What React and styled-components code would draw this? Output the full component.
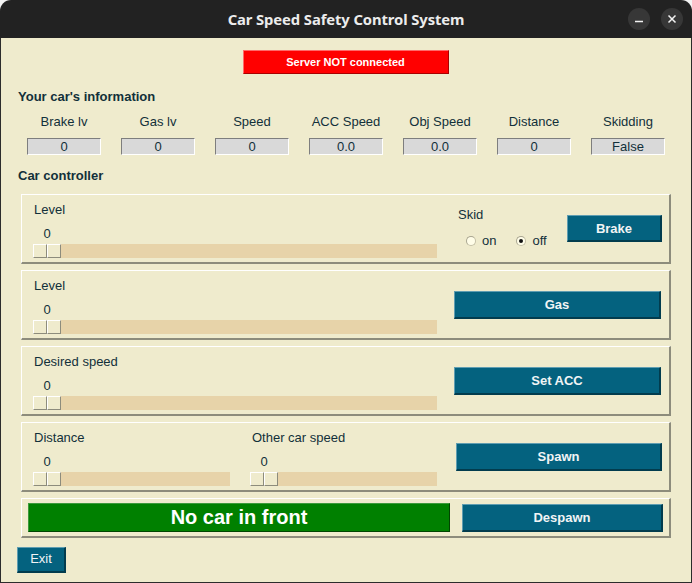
import React from "react";
import styled, { createGlobalStyle } from "styled-components";

const GlobalStyle = createGlobalStyle`
  html, body {
    margin: 0;
    padding: 0;
    background: #f3f3f3;
  }
  body {
    font-family: "Liberation Sans", Arial, sans-serif;
  }
`;

const Window = styled.div`
  width: 692px;
  height: 583px;
  display: flex;
  flex-direction: column;
  border-radius: 11px 11px 0 0;
  overflow: hidden;
  background: #222222;
`;

const TitleBar = styled.div`
  height: 38px;
  flex: none;
  display: grid;
  grid-template-columns: 1fr auto 1fr;
  align-items: center;
`;

const Title = styled.div`
  grid-column: 2;
  color: #ececec;
  font-family: "Noto Sans", sans-serif;
  font-weight: 700;
  font-size: 14.8px;
  letter-spacing: -0.1px;
`;

const Controls = styled.div`
  grid-column: 3;
  justify-self: end;
  display: flex;
  gap: 11px;
  padding-right: 9px;
`;

const CtrlButton = styled.div`
  width: 22px;
  height: 22px;
  border-radius: 50%;
  background: #373737;
  display: flex;
  align-items: center;
  justify-content: center;
`;

const Body = styled.div`
  flex: 1;
  background: #efebcd;
  border: 1px solid #2c2c2c;
  border-top: none;
  padding: 12px 0 0 16px;
  display: flex;
  flex-direction: column;
  color: #12303a;
`;

const Status = styled.div`
  align-self: center;
  margin-left: -17px;
  width: 206px;
  height: 24px;
  box-sizing: border-box;
  background: #ff0000;
  border-top: 1px solid #ff6a6a;
  border-left: 1px solid #ff6a6a;
  border-bottom: 1px solid #a80000;
  border-right: 1px solid #a80000;
  color: #ffffff;
  font-weight: 700;
  font-size: 11px;
  display: flex;
  align-items: center;
  justify-content: center;
`;

const Heading = styled.div`
  font-weight: 700;
  font-size: 13px;
  line-height: 16px;
  padding-top: 1px;
  margin-left: 1px;
  margin-top: ${(p) => p.$top}px;
`;

const InfoRow = styled.div`
  display: flex;
  gap: 20px;
  margin: 8px 0 0 10px;
`;

const InfoCol = styled.div`
  width: 74px;
  display: flex;
  flex-direction: column;
  align-items: center;
  gap: 8px;
`;

const InfoLabel = styled.div`
  font-size: 13px;
  line-height: 16px;
  padding-top: 1px;
  white-space: nowrap;
`;

const Entry = styled.div`
  width: 74px;
  height: 17px;
  box-sizing: border-box;
  background: #d9d9d9;
  border-top: 1px solid #7e7e7e;
  border-left: 1px solid #7e7e7e;
  border-bottom: 1px solid #ffffff;
  border-right: 1px solid #ffffff;
  font-size: 13px;
  line-height: 15px;
  text-align: center;
`;

const Panels = styled.div`
  display: flex;
  flex-direction: column;
  gap: 6px;
  margin: 10px 0 0 4px;
  width: 650px;
`;

const Panel = styled.div`
  height: ${(p) => p.$h || 70}px;
  box-sizing: border-box;
  border-top: 1px solid #ffffff;
  border-left: 1px solid #ffffff;
  border-right: 2px solid #8d8c7c;
  border-bottom: 2px solid #8d8c7c;
  display: flex;
  align-items: center;
  padding: 0 7px 0 ${(p) => p.$pl ?? 11}px;
`;

const SliderGroup = styled.div`
  width: ${(p) => p.$w}px;
  display: flex;
  flex-direction: column;
  padding-top: 2px;
  margin-right: ${(p) => p.$mr || 0}px;
`;

const SliderLabel = styled.div`
  font-size: 13px;
  line-height: 15px;
  padding-left: ${(p) => p.$pl ?? 1}px;
  margin-bottom: 9px;
  white-space: nowrap;
`;

const SliderValue = styled.div`
  width: 28px;
  text-align: center;
  font-size: 13px;
  line-height: 15px;
  margin-bottom: 3px;
`;

const Trough = styled.div`
  height: 14px;
  background: #e7d3a9;
  display: flex;
`;

const HandleHalf = styled.div`
  width: 14px;
  height: 14px;
  box-sizing: border-box;
  background: #efebcd;
  border-top: 1px solid #ffffff;
  border-left: 1px solid #ffffff;
  border-bottom: 1px solid #8d8c7c;
  border-right: 1px solid #8d8c7c;
`;

const SkidGroup = styled.div`
  display: flex;
  flex-direction: column;
  gap: 11px;
  margin-left: 21px;
  padding: 2px 0 4px;
`;

const SkidLabel = styled.div`
  font-size: 13px;
  line-height: 15px;
`;

const RadioRow = styled.div`
  display: flex;
  gap: 20px;
  padding-left: 8px;
`;

const RadioItem = styled.label`
  display: flex;
  align-items: center;
  gap: 6px;
  font-size: 13px;
  line-height: 15px;
`;

const RadioDot = styled.span`
  width: 10px;
  height: 10px;
  box-sizing: border-box;
  border-radius: 50%;
  background: #fffde8;
  border: 1px solid #c4c0a6;
  border-top-color: #a8a590;
  border-left-color: #a8a590;
  display: flex;
  align-items: center;
  justify-content: center;
  &::after {
    content: "";
    width: 4px;
    height: 4px;
    border-radius: 50%;
    background: ${(p) => (p.$on ? "#111" : "transparent")};
  }
`;

const Button = styled.div`
  width: ${(p) => p.$w}px;
  height: ${(p) => p.$h || 28}px;
  margin-left: auto;
  margin-right: ${(p) => p.$mr || 0}px;
  box-sizing: border-box;
  padding-top: 1px;
  background: #04627f;
  border-top: 1px solid #5f9db1;
  border-left: 1px solid #5f9db1;
  border-bottom: 2px solid #023c4e;
  border-right: 2px solid #023c4e;
  color: #f1f4f5;
  font-weight: 700;
  font-size: 13px;
  display: flex;
  align-items: center;
  justify-content: center;
`;

const Indicator = styled.div`
  width: 422px;
  height: 29px;
  box-sizing: border-box;
  background: #008000;
  border-top: 1px solid #3c9a3c;
  border-left: 1px solid #3c9a3c;
  border-bottom: 1px solid #004400;
  border-right: 1px solid #004400;
  color: #ffffff;
  font-weight: 700;
  font-size: 20px;
  display: flex;
  align-items: center;
  justify-content: center;
`;

const ExitButton = styled.div`
  width: 49px;
  height: 26px;
  margin-top: 9px;
  box-sizing: border-box;
  background: #04627f;
  border-top: 1px solid #5f9db1;
  border-left: 1px solid #5f9db1;
  border-bottom: 2px solid #023c4e;
  border-right: 2px solid #023c4e;
  color: #f1f4f5;
  font-size: 13px;
  display: flex;
  align-items: center;
  justify-content: center;
  padding-bottom: 3px;
`;

const info = [
  ["Brake lv", "0"],
  ["Gas lv", "0"],
  ["Speed", "0"],
  ["ACC Speed", "0.0"],
  ["Obj Speed", "0.0"],
  ["Distance", "0"],
  ["Skidding", "False"],
];

function Slider({ label, width, mr, labelPad }) {
  return (
    <SliderGroup $w={width} $mr={mr}>
      <SliderLabel $pl={labelPad}>{label}</SliderLabel>
      <SliderValue>0</SliderValue>
      <Trough>
        <HandleHalf />
        <HandleHalf />
      </Trough>
    </SliderGroup>
  );
}

export default function App() {
  return (
    <>
      <GlobalStyle />
      <Window>
        <TitleBar>
          <Title>Car Speed Safety Control System</Title>
          <Controls>
            <CtrlButton>
              <svg width="10" height="10" viewBox="0 0 10 10">
                <path d="M1 7.5h8" stroke="#f2f2f2" strokeWidth="1.6" />
              </svg>
            </CtrlButton>
            <CtrlButton>
              <svg width="10" height="10" viewBox="0 0 10 10">
                <path d="M1.5 1.5l7 7M8.5 1.5l-7 7" stroke="#f2f2f2" strokeWidth="1.5" />
              </svg>
            </CtrlButton>
          </Controls>
        </TitleBar>
        <Body>
          <Status>Server NOT connected</Status>
          <Heading $top={14}>Your car's information</Heading>
          <InfoRow>
            {info.map(([label, value]) => (
              <InfoCol key={label}>
                <InfoLabel>{label}</InfoLabel>
                <Entry>{value}</Entry>
              </InfoCol>
            ))}
          </InfoRow>
          <Heading $top={12}>Car controller</Heading>
          <Panels>
            <Panel>
              <Slider label="Level" width={404} />
              <SkidGroup>
                <SkidLabel>Skid</SkidLabel>
                <RadioRow>
                  <RadioItem>
                    <RadioDot />
                    on
                  </RadioItem>
                  <RadioItem>
                    <RadioDot $on />
                    off
                  </RadioItem>
                </RadioRow>
              </SkidGroup>
              <Button $w={95} $h={27}>Brake</Button>
            </Panel>
            <Panel>
              <Slider label="Level" width={404} />
              <Button $w={207} $mr={1}>Gas</Button>
            </Panel>
            <Panel>
              <Slider label="Desired speed" width={404} />
              <Button $w={207} $mr={1}>Set ACC</Button>
            </Panel>
            <Panel>
              <Slider label="Distance" width={197} mr={20} />
              <Slider label="Other car speed" width={187} labelPad={2} />
              <Button $w={206}>Spawn</Button>
            </Panel>
            <Panel $h={40} $pl={6}>
              <Indicator>No car in front</Indicator>
              <Button $w={201} $h={28} $mr={-1}>Despawn</Button>
            </Panel>
          </Panels>
          <ExitButton>Exit</ExitButton>
        </Body>
      </Window>
    </>
  );
}
